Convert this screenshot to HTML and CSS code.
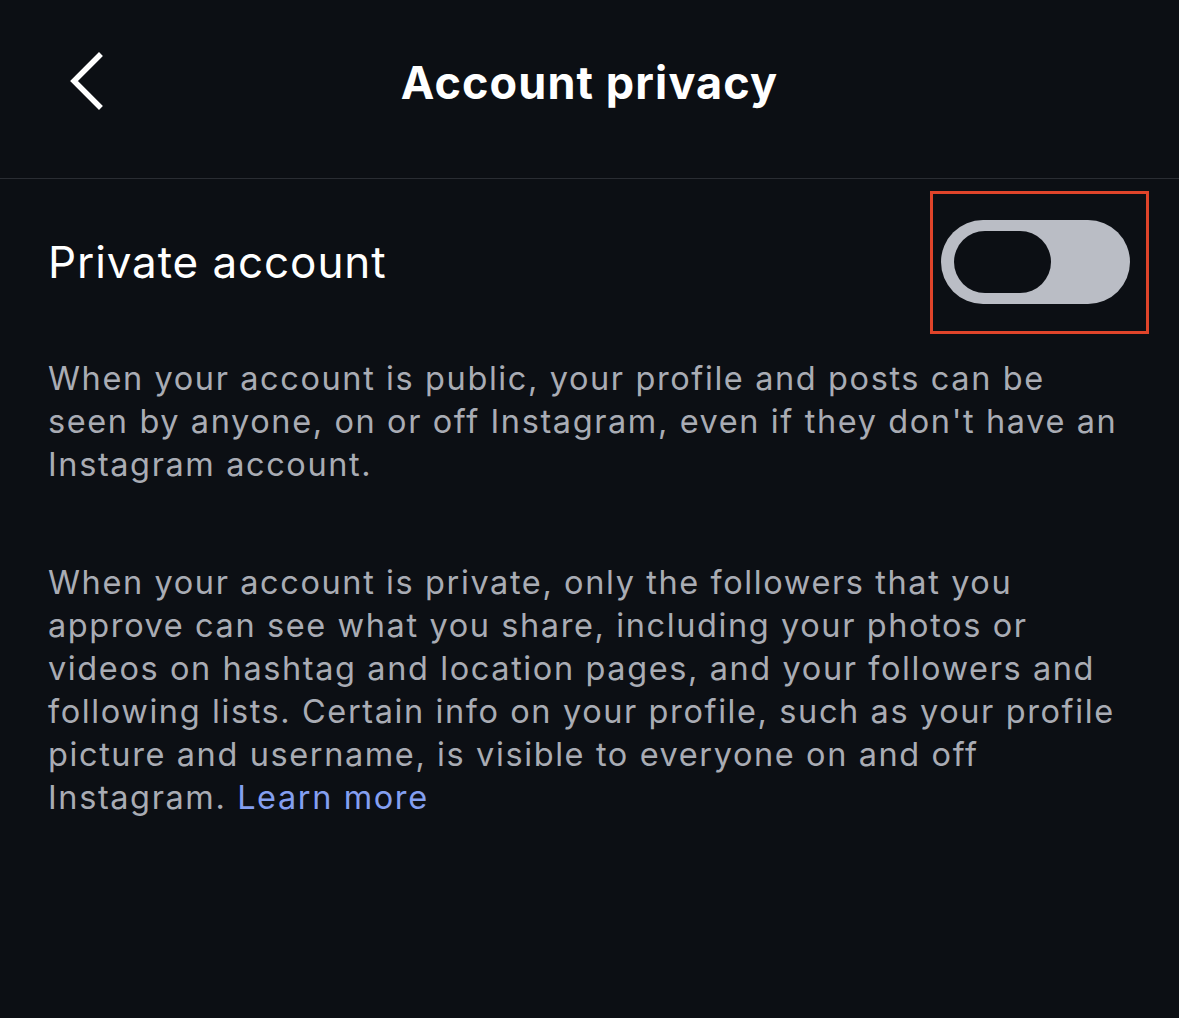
FILE: index.html
```html
<!DOCTYPE html>
<html lang="en">
<head>
<meta charset="utf-8">
<title>Account privacy</title>
<link rel="stylesheet" href="styles.css">
</head>
<body>
<div class="screen">
  <header class="topbar">
    <button class="back" aria-label="Back">
      <svg width="40" height="60" viewBox="0 0 40 60"><path d="M33 4 L8 29 L33 54" fill="none" stroke="#ffffff" stroke-width="5.5" stroke-linecap="square" stroke-linejoin="miter"/></svg>
    </button>
    <h1 class="title">Account privacy</h1>
    <span class="spacer"></span>
  </header>
  <main class="content">
    <div class="row">
      <span class="row-label">Private account</span>
      <div class="highlight">
        <div class="toggle"><div class="knob"></div></div>
      </div>
    </div>
    <p class="desc">When your account is public, your profile and posts can be<br>seen by anyone, on or off Instagram, even if they don't have an<br>Instagram account.</p>
    <p class="desc second">When your account is private, only the followers that you<br>approve can see what you share, including your photos or<br>videos on hashtag and location pages, and your followers and<br>following lists. Certain info on your profile, such as your profile<br>picture and username, is visible to everyone on and off<br>Instagram. <a class="link" href="#">Learn more</a></p>
  </main>
</div>
</body>
</html>
```
FILE: styles.css
```css
* { box-sizing: border-box; }
html, body { margin: 0; padding: 0; background: #0c0f14; }
body { font-family: Inter, "Noto Sans", sans-serif; color: #ffffff; }
.screen { width: 1179px; height: 1018px; background: #0c0f14; }
.topbar {
  height: 179px;
  border-bottom: 1px solid #2a2d33;
  display: flex;
  align-items: center;
  padding: 0 0 14px 66px;
}
.back { background: none; border: 0; padding: 0; width: 40px; height: 60px; display: flex; }
.title {
  flex: 1;
  margin: 0 106px 0 0;
  text-align: center;
  font-size: 45px;
  font-weight: 700;
  letter-spacing: 1.1px;
}
.spacer { width: 0; }
.content { padding: 12px 30px 0 48px; }
.row { display: flex; align-items: center; justify-content: space-between; height: 142px; }
.row-label { font-size: 44px; font-weight: 400; letter-spacing: 0.9px; }
.highlight {
  width: 219px; height: 143px;
  border: 3px solid #e0442a;
  display: flex; align-items: center;
  padding-left: 8px;
}
.toggle {
  width: 189px; height: 84px;
  border-radius: 42px;
  background: #babdc5;
  display: flex; align-items: center;
  padding-left: 13px;
}
.knob { width: 97px; height: 62px; border-radius: 31px; background: #0c0f14; }
.desc {
  margin: 24px 0 0 0;
  font-size: 32.5px;
  line-height: 43px;
  color: #a9acb4;
  letter-spacing: 1.6px;
}
.desc.second { margin-top: 75px; }
.link { color: #849ff0; text-decoration: none; }
```
